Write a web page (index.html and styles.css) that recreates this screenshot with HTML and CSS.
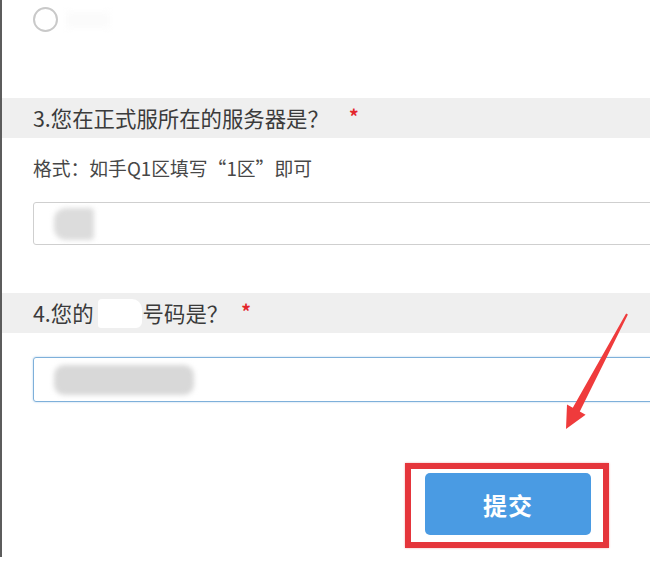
FILE: index.html
```html
<!DOCTYPE html>
<html lang="zh-CN">
<head>
<meta charset="utf-8">
<title>问卷</title>
<link rel="stylesheet" href="styles.css">
</head>
<body>
<div class="page">
  <div class="radio-row">
    <span class="radio"></span>
    <span class="radio-label"></span>
  </div>

  <div class="q-head">
    <span class="q-text">3.您在正式服所在的服务器是？</span>
    <span class="req">*</span>
  </div>
  <div class="q-hint">格式：如手Q1区填写“1区”即可</div>
  <div class="field">
    <span class="smudge smudge-a"></span>
  </div>

  <div class="q-head q-head-4">
    <span class="q-text">4.您的<span class="redact"></span>号码是？</span>
    <span class="req">*</span>
  </div>
  <div class="field field-focus">
    <span class="smudge smudge-b"></span>
  </div>

  <div class="actions">
    <div class="highlight">
      <button class="submit" type="button">提交</button>
    </div>
  </div>

  <svg class="arrow" width="650" height="567" viewBox="0 0 650 567" aria-hidden="true">
    <polygon points="627.9,314.5 579.8,411.5 585.6,414.8 566,429 567,404.5 572.8,407.7 626.1,313.5" fill="#ef3b3c"/>
  </svg>
</div>
</body>
</html>
```

FILE: styles.css
```css
html, body {
  margin: 0;
  padding: 0;
  background: #ffffff;
}

body {
  font-family: "Noto Sans CJK SC", "Noto Sans", sans-serif;
  color: #3a3a3a;
  width: 650px;
  height: 567px;
  overflow: hidden;
}

.page {
  position: relative;
  width: 648px;
  height: 557px;
  border-left: 2px solid #5c5c5c;
  overflow: hidden;
}

.radio-row {
  height: 98px;
  box-sizing: border-box;
  padding: 7px 0 0 31px;
  display: flex;
  align-items: flex-start;
  gap: 8px;
}

.radio {
  display: block;
  width: 25px;
  height: 25px;
  box-sizing: border-box;
  border: 2px solid #c9c9c9;
  border-radius: 50%;
}

.radio-label {
  display: block;
  width: 44px;
  height: 16px;
  margin-top: 5px;
  background: #fbfbfb;
  filter: blur(3px);
}

.q-head {
  height: 40px;
  background: #efefef;
  display: flex;
  align-items: center;
  padding-left: 31px;
  font-size: 21.4px;
  line-height: 28px;
  color: #3b3b3b;
  white-space: nowrap;
}

.q-text {
  display: flex;
  align-items: center;
}

.req {
  color: #e3262b;
  font-size: 19px;
  font-weight: bold;
  line-height: 19px;
  margin-left: 20px;
  margin-bottom: 6px;
}

.q-head-4 .req {
  margin-left: 13px;
}

.redact {
  display: inline-block;
  width: 44px;
  height: 29px;
  margin: 0 1px 0 4px;
  background: #ffffff;
  border-radius: 4px 10px 6px 3px;
}

.q-hint {
  margin: 17px 0 21px 31px;
  font-size: 18.8px;
  line-height: 26px;
  color: #474747;
  white-space: nowrap;
}

.field {
  height: 43px;
  width: 680px;
  margin-left: 31px;
  box-sizing: border-box;
  border: 1px solid #cfcfcf;
  border-radius: 3px;
  display: flex;
  align-items: center;
  margin-bottom: 48px;
  overflow: hidden;
}

.field-focus {
  height: 45px;
  margin-top: 24px;
  margin-bottom: 0;
  border: 1px solid #7eb0da;
  box-shadow: 0 0 2px rgba(110, 165, 215, 0.6);
}

.smudge {
  display: block;
  background: #dadada;
  filter: blur(2.5px);
  border-radius: 10px;
}

.smudge-a {
  width: 40px;
  height: 32px;
  margin-left: 20px;
  background: #dcdcdc;
  border-radius: 12px 4px 4px 12px;
}

.smudge-b {
  width: 140px;
  height: 30px;
  margin-left: 20px;
  background: #d8d8d8;
}

.actions {
  display: flex;
  justify-content: flex-end;
  padding-right: 41px;
  margin-top: 61px;
}

.highlight {
  border: 6px solid #e5353b;
  padding: 4px 12px 7px 14px;
  box-shadow: 0 0 2px rgba(229, 53, 59, 0.4);
}

.submit {
  display: block;
  width: 166px;
  height: 62px;
  border: none;
  border-radius: 5px;
  background: #4a9be3;
  color: #ffffff;
  font-family: "Noto Sans CJK SC", "Noto Sans", sans-serif;
  font-size: 24px;
  font-weight: bold;
  letter-spacing: 1px;
  padding: 0;
}

.arrow {
  position: absolute;
  left: -2px;
  top: 0;
  pointer-events: none;
}
```
